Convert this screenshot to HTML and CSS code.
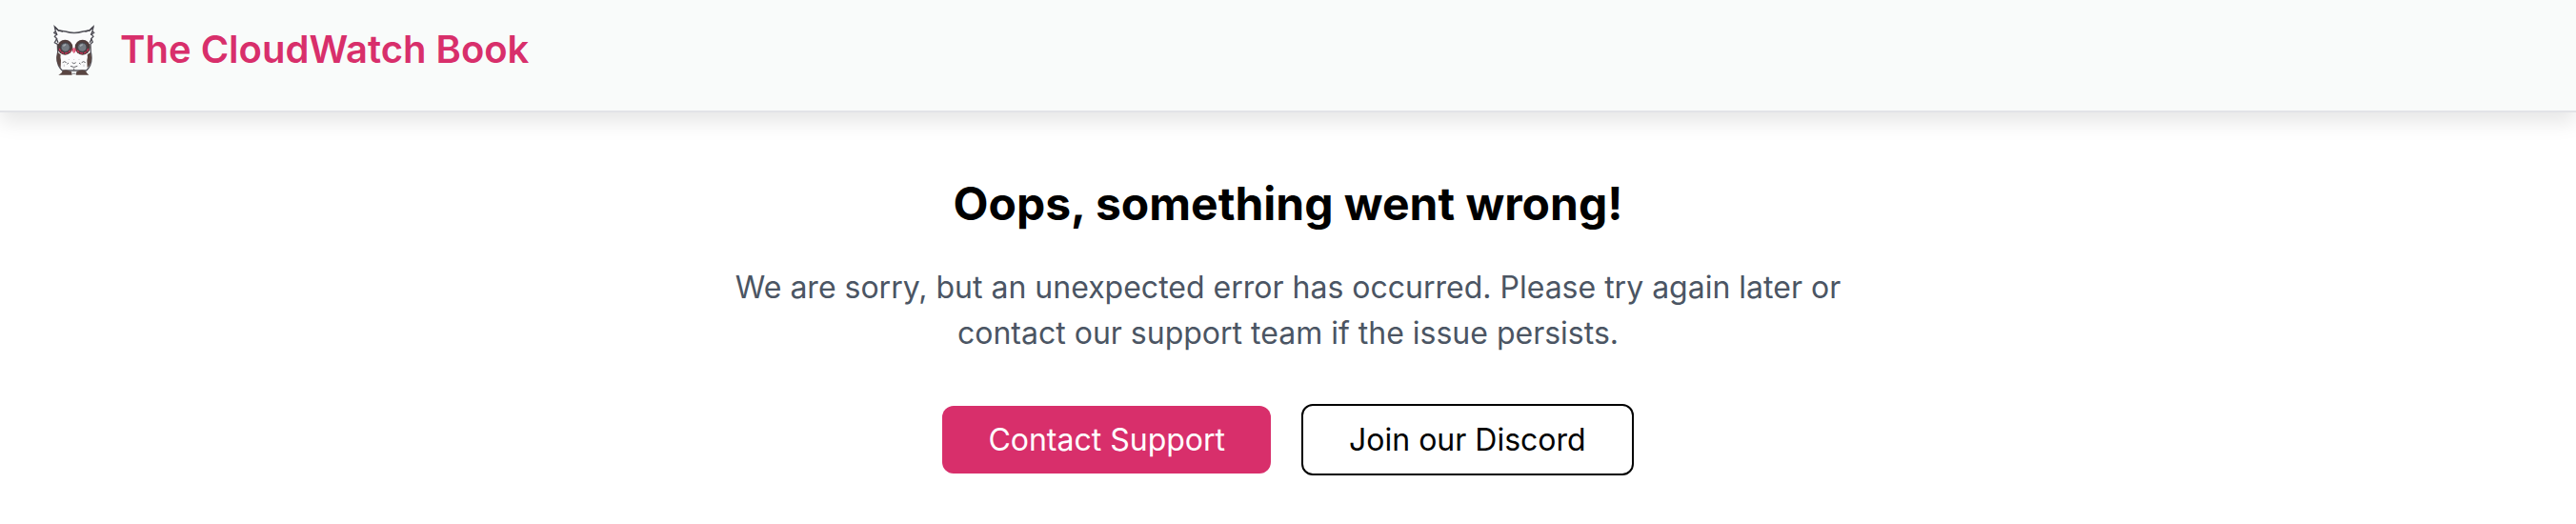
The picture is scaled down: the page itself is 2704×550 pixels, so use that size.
FILE: index.html
```html
<!DOCTYPE html>
<html lang="en">
<head>
    <meta charset="UTF-8">
    <meta name="viewport" content="width=device-width, initial-scale=1.0">
    <title>The CloudWatch Book</title>
    <link rel="stylesheet" href="styles.css">
</head>
<body>

    <!-- Header -->
    <header class="header">
        <a class="brand" href="#">
            <svg class="brand-logo" viewBox="48 36 132 162" aria-hidden="true">
                <!-- Body and ears -->
                <path d="M52 42 L64 54 L86 57 Q113 66 142 57 L162 54 L174 42 L171 57 L176 61 L169 67 L174 73 L167 80 L172 90 L165 97 L166 122 Q174 160 152 180 L76 180 Q54 160 62 122 L61 97 L52 92 L59 80 L52 73 L58 67 L50 61 L55 57 Z" fill="#fafafb" stroke="#55545c" stroke-width="4"/>
                <path d="M52 42 L64 54 L78 57 M174 42 L162 54 L148 57 M55 57 L60 68 M171 57 L166 68 M58 80 L63 92 M168 80 L163 92" fill="none" stroke="#45434b" stroke-width="4"/>
                <!-- Wings -->
                <path d="M62 123 Q51 151 71 172 L72 148 Q69 139 71 130 Z" fill="#594541"/>
                <path d="M164 123 Q175 151 155 172 L154 148 Q157 139 155 130 Z" fill="#594541"/>
                <!-- Goggles -->
                <circle cx="85" cy="107" r="24" fill="#4e3c3b"/>
                <circle cx="140" cy="107" r="24" fill="#4e3c3b"/>
                <path d="M67 111 Q70 124 84 126 Q97 125 103 115 M158 111 Q155 124 141 126 Q128 125 122 115" fill="none" stroke="#cb3259" stroke-width="4" stroke-dasharray="9 3"/>
                <circle cx="86" cy="107" r="14" fill="#747a81" stroke="#42434b" stroke-width="3"/>
                <circle cx="139" cy="107" r="14" fill="#747a81" stroke="#42434b" stroke-width="3"/>
                <path d="M79 103 L87 98 M132 103 L140 98" stroke="#a5acb1" stroke-width="4"/>
                <path d="M106 113 Q113 105 120 113 L117 121 L113 126 L109 121 Z" fill="#d84266"/>
                <path d="M113 108 V124" stroke="#ef8da6" stroke-width="3"/>
                <!-- Feathers -->
                <path d="M77 155 Q83 149 89 155 M107 155 L113 158 L119 155 M137 155 Q143 149 149 155 M91 160 L96 156 M129 156 L134 160 M102 166 Q113 173 124 166 M113 173 V181" fill="none" stroke="#65656a" stroke-width="3"/>
                <path d="M82 161 V168 M144 161 V168 M97 144 V147 M113 144 V147 M129 144 V147" stroke="#b7b8bb" stroke-width="2"/>
                <!-- Feet -->
                <path d="M64 194 L73 188 L78 180 Q88 176 97 181 L105 184 L107 194 Z M119 194 L121 184 L130 180 Q140 176 149 181 L154 188 L160 194 Z" fill="#594541"/>
                <path d="M105 182 H121 M107 190 H119" stroke="#85858a" stroke-width="3"/>
            </svg>
            <span class="brand-name">The CloudWatch Book</span>
        </a>
    </header>

    <!-- Error message -->
    <main class="error">
        <h1 class="error-title">Oops, something went wrong!</h1>
        <p class="error-text">We are sorry, but an unexpected error has occurred. Please try again later or contact our support team if the issue persists.</p>
        <div class="error-actions">
            <a class="btn btn-primary" href="#">Contact Support</a>
            <a class="btn btn-outline" href="#">Join our Discord</a>
        </div>
    </main>

</body>
</html>
```

FILE: styles.css
```css
* {
    box-sizing: border-box;
}

body {
    margin: 0;
    font-family: Inter, sans-serif;
    font-size: 32px;
    line-height: 48px;
    color: #000;
    background-color: #fff;
}

a {
    color: inherit;
    text-decoration: none;
}

/* Header */
.header {
    display: flex;
    padding: 24px 56px 36px;
    background-color: #f9fbfa;
    border-bottom: 2px solid #e2e3e7;
    box-shadow: 0 10px 20px rgba(0, 0, 0, 0.1);
}

.brand {
    display: flex;
    align-items: flex-end;
    gap: 26px;
}

.brand-logo {
    width: 44px;
    height: 54px;
}

.brand-name {
    font-size: 40px;
    line-height: 56px;
    font-weight: 600;
    color: #d82f6b;
}

/* Error message */
.error {
    display: flex;
    flex-direction: column;
    align-items: center;
    padding: 64px 32px;
    text-align: center;
}

.error-title {
    margin: 0 0 32px;
    font-size: 48px;
    line-height: 64px;
    font-weight: 700;
}

.error-text {
    max-width: 1200px;
    margin: 0 0 50px;
    color: #4b5563;
}

.error-actions {
    display: flex;
    flex-wrap: wrap;
    align-items: center;
    justify-content: center;
    gap: 32px;
}

.btn {
    padding: 16px 48px;
    line-height: 39px;
    border-radius: 12px;
}

.btn-primary {
    color: #fff;
    background-color: #d82f6b;
}

.btn-outline {
    border: 2px solid #000;
}
```
